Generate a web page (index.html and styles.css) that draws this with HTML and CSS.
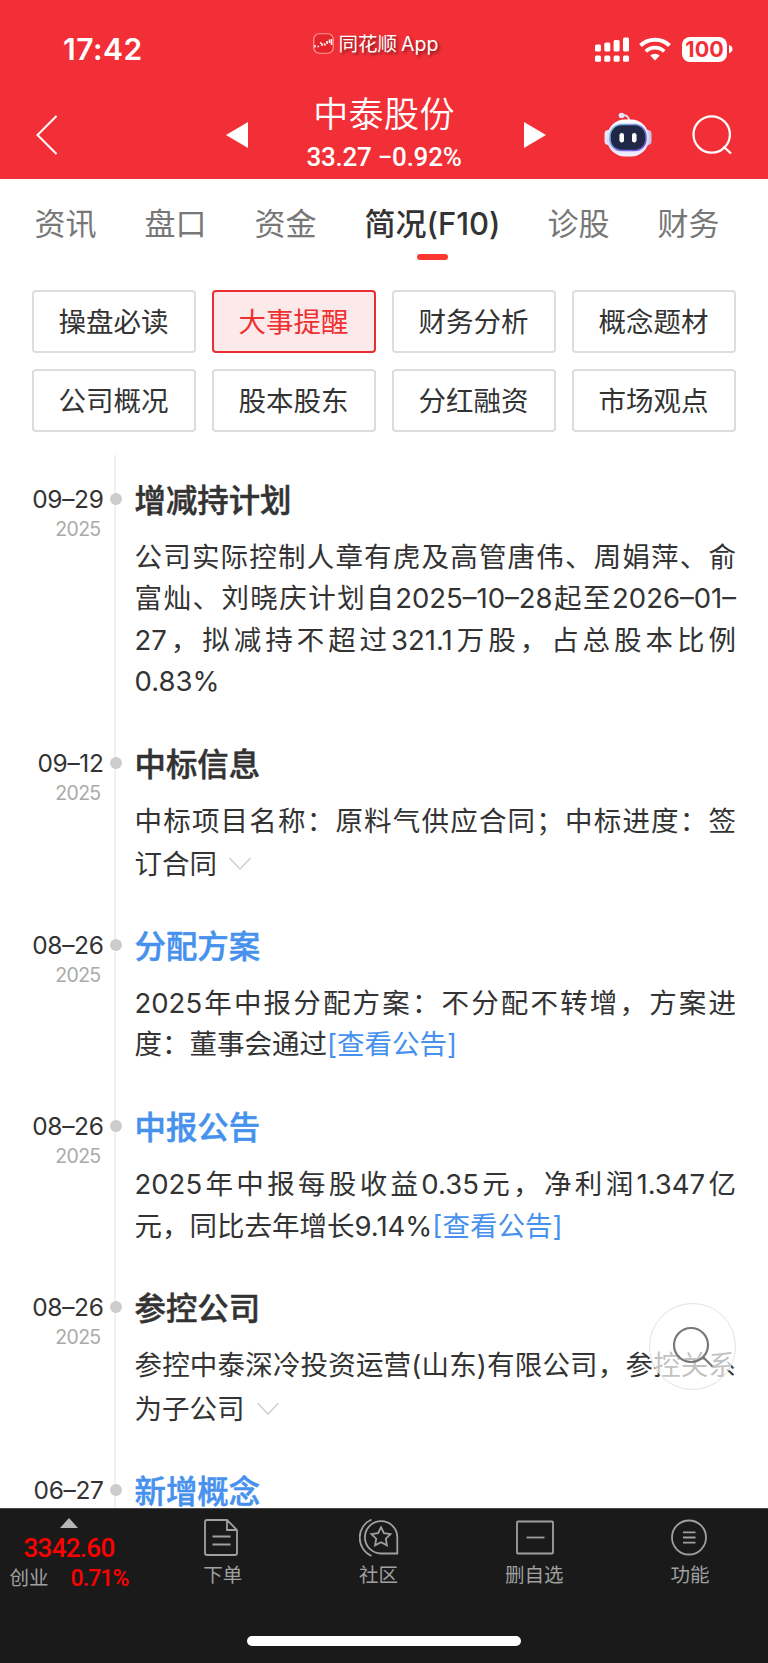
FILE: index.html
```html
<!DOCTYPE html>
<html lang="zh-CN">
<head>
    <meta charset="UTF-8">
    <meta name="viewport" content="width=device-width, initial-scale=1.0">
    <title>中泰股份 - 大事提醒</title>
    <link rel="stylesheet" href="styles.css">
</head>
<body>
    <header class="header">
        <div class="status-bar">
            <span class="time">17:42</span>
            <div class="app-name">
                <svg width="21" height="21" viewBox="0 0 21 21">
                    <rect x="0.75" y="0.75" width="19.5" height="19.5" rx="5.5" fill="#e5242b" stroke="#f99" stroke-width="1.2"/>
                    <path d="M2 12v2.500M4.500 13.500h1.500M7 9.500l2 1.500v2M11 10.500l1.500 2M14 8v3M16.500 6.500v3.500M18.500 6v6" fill="none" stroke="#fff" stroke-width="1.500"/>
                </svg>
                <span>同花顺 App</span>
            </div>
            <div class="status-icons">
                <svg class="signal" width="34" height="25" viewBox="0 0 34 25" fill="#fff">
                    <rect x="0" y="7.500" width="6" height="7" rx="1.500"/>
                    <rect x="9.300" y="5.500" width="6" height="9" rx="1.500"/>
                    <rect x="18.600" y="3" width="6" height="11.500" rx="1.500"/>
                    <rect x="28" y="0.500" width="6" height="14" rx="1.500"/>
                    <rect x="0" y="18.500" width="6" height="6.200" rx="1.500"/>
                    <rect x="9.300" y="18.500" width="6" height="6.200" rx="1.500"/>
                    <rect x="18.600" y="18.500" width="6" height="6.200" rx="1.500"/>
                    <rect x="28" y="18.500" width="6" height="6.200" rx="1.500"/>
                </svg>
                <svg class="wifi" width="32" height="24" viewBox="0 0 32 24">
                    <path d="M1.500 8.500a21 21 0 0 1 29 0" fill="none" stroke="#fff" stroke-width="4"/>
                    <path d="M6.800 14.300a13.200 13.200 0 0 1 18.400 0" fill="none" stroke="#fff" stroke-width="3.800"/>
                    <path d="M16 23.500l-4.700-4.900a6.800 6.800 0 0 1 9.400 0z" fill="#fff"/>
                </svg>
                <div class="battery">100</div>
                <svg width="4" height="8" viewBox="0 0 4 8"><path d="M0 0q3.500 1 3.500 4t-3.500 4z" fill="#fff"/></svg>
            </div>
        </div>
        <div class="title-bar">
            <svg class="back" width="22" height="40" viewBox="0 0 22 40">
                <path d="M20.500 1L1.500 20l19 19" fill="none" stroke="#fff" stroke-width="2"/>
            </svg>
            <svg class="prev" width="22" height="26" viewBox="0 0 22 26"><path d="M22 0v26L0 13z" fill="#fff"/></svg>
            <div class="stock">
                <h1>中泰股份</h1>
                <p>33.27 −0.92%</p>
            </div>
            <svg class="next" width="22" height="26" viewBox="0 0 22 26"><path d="M0 0v26l22-13z" fill="#fff"/></svg>
            <svg class="robot" width="48" height="45" viewBox="0 0 48 45">
                <defs>
                    <linearGradient id="shell" x1="0" y1="0" x2="0" y2="1">
                        <stop offset="0" stop-color="#fff"/>
                        <stop offset="0.6" stop-color="#d9d7f3"/>
                        <stop offset="1" stop-color="#f3f0ff"/>
                    </linearGradient>
                    <linearGradient id="rim" x1="0" y1="0" x2="1" y2="1">
                        <stop offset="0" stop-color="#7fc6e6"/>
                        <stop offset="1" stop-color="#7542d6"/>
                    </linearGradient>
                </defs>
                <path d="M18 3.500q6.500-1 7 5" fill="none" stroke="#e6e0f4" stroke-width="2"/>
                <circle cx="17.500" cy="3.500" r="2.800" fill="#e9e5f8"/>
                <rect x="0.500" y="18" width="8" height="15" rx="4" fill="#e9e6fa"/>
                <rect x="39.500" y="18" width="8" height="15" rx="4" fill="#c9c6ee"/>
                <rect x="3" y="7.500" width="42" height="37" rx="18" fill="url(#shell)"/>
                <rect x="6" y="12.500" width="36" height="26" rx="11.500" fill="#202847" stroke="url(#rim)" stroke-width="1.500"/>
                <rect x="15.500" y="21" width="4.500" height="9.500" rx="2.200" fill="#fff"/>
                <rect x="28" y="21" width="4.500" height="9.500" rx="2.200" fill="#fff"/>
            </svg>
            <svg class="search" width="40" height="40" viewBox="0 0 40 40" fill="none" stroke="#fff" stroke-width="2.200">
                <circle cx="19.700" cy="19.500" r="18.200"/>
                <path d="M31.500 31.500l7.500 7"/>
            </svg>
        </div>
    </header>

    <nav class="tabs">
        <a>资讯</a>
        <a>盘口</a>
        <a>资金</a>
        <a class="active">简况(F10)</a>
        <a>诊股</a>
        <a>财务</a>
    </nav>

    <div class="menu">
        <button>操盘必读</button>
        <button class="active">大事提醒</button>
        <button>财务分析</button>
        <button>概念题材</button>
        <button>公司概况</button>
        <button>股本股东</button>
        <button>分红融资</button>
        <button>市场观点</button>
    </div>

    <main class="timeline">
        <section class="event">
            <div class="date"><b>09–29</b><small>2025</small></div>
            <div class="dot"></div>
            <div class="content">
                <h2>增减持计划</h2>
                <p>公司实际控制人章有虎及高管唐伟、周娟萍、俞富灿、刘晓庆计划自2025–10–28起至2026–01–27，拟减持不超过321.1万股，占总股本比例0.83%</p>
            </div>
        </section>
        <section class="event">
            <div class="date"><b>09–12</b><small>2025</small></div>
            <div class="dot"></div>
            <div class="content">
                <h2>中标信息</h2>
                <p>中标项目名称：原料气供应合同；中标进度：签订合同<svg class="arrow" width="24" height="14" viewBox="0 0 24 14"><path d="M1.500 1L12 12 22.500 1" fill="none" stroke="#d4d4d4" stroke-width="1.800"/></svg></p>
            </div>
        </section>
        <section class="event">
            <div class="date"><b>08–26</b><small>2025</small></div>
            <div class="dot"></div>
            <div class="content">
                <h2 class="link">分配方案</h2>
                <p>2025年中报分配方案：不分配不转增，方案进度：董事会通过<a>[查看公告]</a></p>
            </div>
        </section>
        <section class="event">
            <div class="date"><b>08–26</b><small>2025</small></div>
            <div class="dot"></div>
            <div class="content">
                <h2 class="link">中报公告</h2>
                <p>2025年中报每股收益0.35元，净利润1.347亿元，同比去年增长9.14%<a>[查看公告]</a></p>
            </div>
        </section>
        <section class="event">
            <div class="date"><b>08–26</b><small>2025</small></div>
            <div class="dot"></div>
            <div class="content">
                <h2>参控公司</h2>
                <p>参控中泰深冷投资运营(山东)有限公司，参控关系为子公司<svg class="arrow" width="24" height="14" viewBox="0 0 24 14"><path d="M1.500 1L12 12 22.500 1" fill="none" stroke="#d4d4d4" stroke-width="1.800"/></svg></p>
            </div>
        </section>
        <section class="event">
            <div class="date"><b>06–27</b></div>
            <div class="dot"></div>
            <div class="content">
                <h2 class="link">新增概念</h2>
            </div>
        </section>
    </main>

    <div class="float-search">
        <svg width="46" height="46" viewBox="0 0 46 46" fill="none" stroke="#777" stroke-width="2.200">
            <circle cx="21" cy="21" r="17"/>
            <path d="M33 33l9.500 9.500"/>
        </svg>
    </div>

    <footer class="bottom-bar">
        <div class="bar-row">
            <div class="index">
                <svg width="18" height="10" viewBox="0 0 18 10"><path d="M9 0l9 10H0z" fill="#b5b5b5"/></svg>
                <strong>3342.60</strong>
                <div class="index-row"><span>创业</span><em>0.71%</em></div>
            </div>
            <div class="bar-item">
                <svg width="40" height="40" viewBox="0 0 40 40">
                    <path d="M24 2H4q-2 0-2 2v31q0 2 2 2h28q2 0 2-2V12zM24 2v10h10M9.500 18.500h18M9.500 26.500h18"/>
                </svg>
                <span>下单</span>
            </div>
            <div class="bar-item">
                <svg width="40" height="40" viewBox="0 0 40 40">
                    <path d="M12.500 1.500a20 20 0 0 0 0 36.500M38.300 35.500H22a16.200 16.200 0 1 1 16.300-16.200z"/>
                    <path d="M22 9.200l2.900 6 6.600.9-4.700 4.600 1.100 6.600-5.900-3.100-5.900 3.100 1.100-6.600-4.700-4.600 6.600-.9z"/>
                </svg>
                <span>社区</span>
            </div>
            <div class="bar-item">
                <svg width="40" height="40" viewBox="0 0 40 40">
                    <rect x="3" y="3.500" width="36" height="32" rx="1"/>
                    <path d="M12.500 19.500h18"/>
                </svg>
                <span>删自选</span>
            </div>
            <div class="bar-item">
                <svg width="40" height="40" viewBox="0 0 40 40">
                    <circle cx="19" cy="19.500" r="17"/>
                    <path d="M13 14.300h12.500M13 19.500h12.500M13 24.700h12.500"/>
                </svg>
                <span>功能</span>
            </div>
        </div>
        <div class="home-line"></div>
    </footer>
</body>
</html>
```
FILE: styles.css
```css
* {
    box-sizing: border-box;
}
body {
    font-family: Inter, "Noto Sans CJK SC", sans-serif;
    font-weight: 390;
    margin: 0;
    height: 1663px;
    display: flex;
    flex-direction: column;
    overflow: hidden;
    background-color: #fff;
    color: #333;
}
svg {
    display: block;
    flex: none;
}
h1, h2, p {
    margin: 0;
}

/* header */
.header {
    height: 179px;
    flex: none;
    background-color: #f22f37;
    color: #fff;
}
.status-bar {
    height: 88px;
    display: grid;
    grid-template-columns: 250px 250px 1fr;
    align-items: start;
}
.time {
    padding: 31px 0 0 63px;
    font-size: 30px;
    line-height: 36px;
    font-weight: 600;
    letter-spacing: 0.5px;
}
.app-name {
    display: flex;
    align-items: center;
    justify-content: center;
    gap: 5px;
    height: 28px;
    margin-top: 29px;
    padding-left: 1px;
    font-size: 19.5px;
    line-height: 28px;
    font-weight: 400;
    word-spacing: -1.5px;
    text-shadow: 2px 2px 3px rgba(0, 0, 0, 0.45);
}
.app-name span {
    padding-top: 2px;
}
.status-icons {
    display: flex;
    align-items: center;
    height: 26px;
    margin: 36px 0 0 95px;
}
.wifi {
    margin: 0 11px 0 10px;
}
.battery {
    width: 45px;
    height: 25px;
    margin-right: 2px;
    border-radius: 8px;
    background-color: #fff;
    color: #f22f37;
    font-size: 21.5px;
    line-height: 25px;
    font-weight: 700;
    text-align: center;
}
.title-bar {
    height: 91px;
    display: flex;
    padding-left: 36px;
}
.back {
    margin-top: 27px;
}
.prev {
    margin: 34px 0 0 168px;
}
.stock {
    width: 275px;
    text-align: center;
}
.stock h1 {
    padding: 4px 3px 0 0;
    font-size: 35px;
    line-height: 44px;
    font-weight: 350;
    letter-spacing: 0.4px;
}
.stock p {
    font-family: Roboto, sans-serif;
    font-size: 26px;
    line-height: 30px;
    margin-top: 6px;
    padding-right: 3px;
    font-weight: 500;
    letter-spacing: -0.25px;
}
.next {
    margin: 34px 0 0 1px;
}
.robot {
    margin: 24px 0 0 58px;
}
.search {
    margin: 27px 0 0 40px;
}

/* tabs */
.tabs {
    display: flex;
    gap: 48px;
    flex: none;
    height: 111px;
    padding: 22px 0 0 34.5px;
    font-size: 31px;
    line-height: 46px;
    color: #777;
    white-space: nowrap;
}
.tabs .active {
    width: 135px;
    color: #333;
    font-weight: 500;
}
.tabs .active::after {
    content: "";
    display: block;
    width: 31px;
    height: 6px;
    margin: 7px auto 0;
    border-radius: 3px;
    background-color: #fb3730;
}

/* menu buttons */
.menu {
    display: grid;
    grid-template-columns: repeat(4, 1fr);
    grid-auto-rows: 63px;
    gap: 16px;
    flex: none;
    padding: 0 32px;
}
.menu button {
    padding: 0 1px 4px 0;
    font-family: inherit;
    font-size: 27.5px;
    font-weight: inherit;
    color: #333;
    background-color: #fff;
    border: 2px solid #ddd;
    border-radius: 4px;
}
.menu .active {
    color: #f03030;
    background-color: #fce9ea;
    border-color: #e92e33;
}

/* timeline */
.timeline {
    flex: 1;
    min-height: 0;
    overflow: hidden;
    margin-top: 23px;
    padding-top: 23px;
    background: linear-gradient(#f0f0f0, #f0f0f0) 114px 0 / 2px 100% no-repeat;
}
.event {
    display: grid;
    grid-template-columns: 103.5px 6px 12px 1fr;
    padding-bottom: 39.6px;
}
.date {
    text-align: right;
}
.date b {
    display: block;
    font-size: 24.5px;
    line-height: 42px;
    font-weight: 390;
    letter-spacing: -0.35px;
}
.date small {
    display: block;
    font-size: 19.5px;
    line-height: 19px;
    letter-spacing: -0.7px;
    padding-right: 3px;
    color: #aaa;
}
.dot {
    grid-column: 3;
    width: 12px;
    height: 12px;
    margin-top: 15px;
    border-radius: 50%;
    background-color: #ccc;
}
.content {
    padding: 0 32px 0 13px;
}
.content h2 {
    font-size: 31.4px;
    line-height: 46px;
    font-weight: 500;
    -webkit-text-stroke: 0.5px currentColor;
}
.content h2.link,
.content a {
    color: #4691ee;
}
.content p {
    margin-top: 13px;
    font-size: 27.5px;
    line-height: 41.25px;
    text-align: justify;
}
.arrow {
    display: inline-block;
    margin: 15.5px 0 0 11px;
    vertical-align: 2px;
}

/* floating search */
.float-search {
    position: absolute;
    left: 649px;
    top: 1303px;
    width: 87px;
    height: 87px;
    padding: 20px;
    border: 1.5px solid #e2e2e2;
    border-radius: 50%;
    background-color: rgba(255, 255, 255, 0.7);
}

/* bottom bar */
.bottom-bar {
    flex: none;
    height: 155px;
    border-top: 1px solid #4a4a4a;
    background-color: #1a1a1a;
    color: #a0a0a0;
    font-size: 19.5px;
}
.bar-row {
    display: grid;
    grid-template-columns: 145px repeat(4, 1fr);
    height: 127px;
}
.index {
    display: flex;
    flex-direction: column;
    align-items: center;
    padding: 9px 7px 0 0;
}
.index strong,
.index em {
    font-family: Roboto, sans-serif;
    font-style: normal;
    font-weight: 500;
    color: #f00;
}
.index strong {
    margin-top: 5px;
    font-size: 26px;
    line-height: 30px;
    letter-spacing: -0.7px;
}
.index-row {
    display: flex;
    gap: 22px;
    line-height: 31px;
}
.index em {
    font-size: 23px;
    letter-spacing: -0.9px;
}
.bar-item {
    display: flex;
    flex-direction: column;
    align-items: center;
    padding-top: 9px;
    line-height: 28px;
}
.bar-item svg {
    fill: none;
    stroke: #a0a0a0;
    stroke-width: 1.8;
    margin-bottom: 3px;
}
.home-line {
    width: 274px;
    height: 10px;
    margin: 0 auto;
    border-radius: 5px;
    background-color: #fff;
}
```
